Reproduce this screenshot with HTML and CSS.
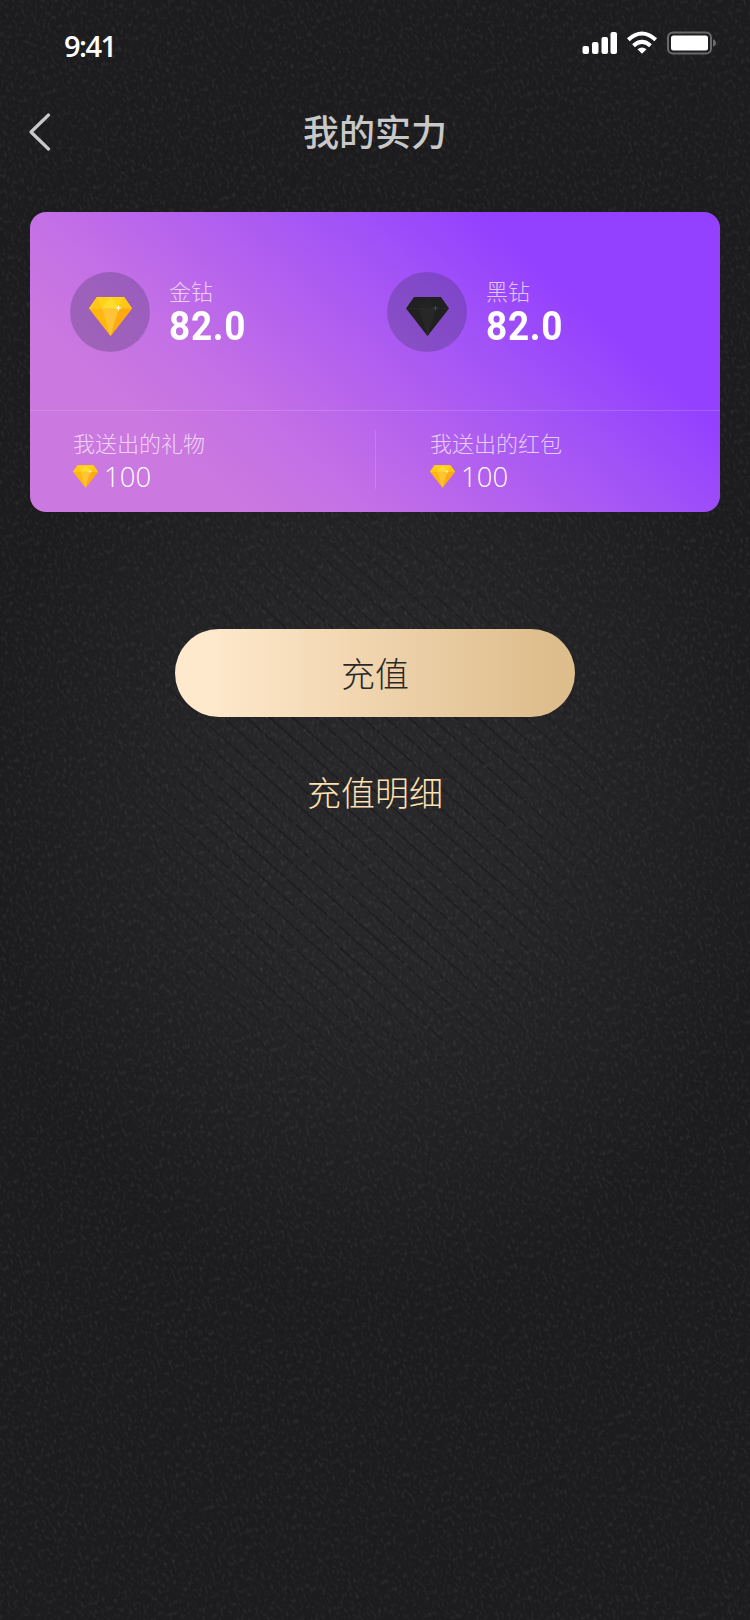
FILE: index.html
```html
<!DOCTYPE html>
<html lang="zh-CN">
<head>
<meta charset="utf-8">
<title>我的实力</title>
<link rel="stylesheet" href="styles.css">
</head>
<body>
<svg class="defs" width="0" height="0" aria-hidden="true">
  <defs>
    <symbol id="gem" viewBox="0 0 43 39">
      <path fill="#ffb60d" d="M0 11.500 21.500 39 43 11.500 35 0H8z"/>
      <path fill="#ffd21a" d="M8 0h27l8 11.500H0z"/>
      <path fill="#ffc61a" d="M8 0 13 11.500H0zM35 0l8 11.500H30z"/>
      <path fill="#ffdc2e" d="M21.500 0 30 11.500H13z"/>
      <path fill="#ffc436" d="M13 11.500h17L21.500 39z"/>
      <path fill="#ffaa10" d="M30 11.500h13L21.500 39z"/>
      <path fill="#fffbe0" d="m29.500 8 .8 2.200 2.700.8-2.700.8-.8 2.700-.8-2.700-2.700-.8 2.700-.8z"/>
    </symbol>
    <symbol id="gem-dark" viewBox="0 0 43 39">
      <path fill="#202020" d="M0 11.500 21.500 39 43 11.500 35 0H8z"/>
      <path fill="#232324" d="M21.500 0 30 11.500H13z"/>
      <path fill="#272727" d="M13 11.500h17L21.500 39z"/>
      <path fill="none" stroke="#2b2b30" stroke-width=".6" d="M1 11.500h41"/>
      <path fill="#4c4666" d="m29.500 8 .6 2.400 2.900.6-2.900.6-.6 2.900-.6-2.900-2.900-.6 2.900-.6z"/>
    </symbol>
  </defs>
</svg>
<div class="page">
  <svg class="grain" width="750" height="1620" aria-hidden="true">
    <filter id="grain" x="0" y="0" width="100%" height="100%">
      <feTurbulence type="fractalNoise" baseFrequency=".36 .2" numOctaves="3" seed="8"/>
      <feColorMatrix values="0 0 0 0 1  0 0 0 0 1  0 0 0 0 1  .2 0 0 0 -.1"/>
    </filter>
    <rect width="1500" height="2200" x="-300" y="-300" transform="rotate(-18 375 810)" filter="url(#grain)"/>
  </svg>
  <header class="status">
    <span class="time">9:41</span>
    <svg class="signals" width="136" height="24" viewBox="0 0 136 24">
      <g fill="#fff">
        <rect x="2.500" y="15" width="6.500" height="8" rx="2"/>
        <rect x="12" y="11" width="6.500" height="12" rx="2"/>
        <rect x="21.500" y="6" width="6.500" height="17" rx="2"/>
        <rect x="30.500" y="1" width="6.500" height="22" rx="2"/>
        <path d="m62 22.700-4.500-4.400q4.500-3.700 9 0z"/>
      </g>
      <g fill="none" stroke="#fff" stroke-width="4">
        <path d="M48.300 8.700q13.700-12.400 27.400 0"/>
        <path d="M53.500 14.700q8.500-7.600 17 0"/>
      </g>
      <rect x="88" y="1.500" width="43" height="21" rx="5" fill="none" stroke="#69696b" stroke-width="2"/>
      <rect x="91" y="4.500" width="37" height="15" rx="2.500" fill="#fff"/>
      <path fill="#69696b" d="M133 8.300q3 1 3 3.700t-3 3.700z"/>
    </svg>
  </header>
  <nav class="nav">
    <svg class="back" width="22" height="38" viewBox="0 0 22 38"><path d="M19.500 2 2 19l17.500 17" fill="none" stroke="#c8c8c8" stroke-width="3.200" stroke-linecap="round" stroke-linejoin="round"/></svg>
    <h1 class="title">我的实力</h1>
  </nav>
  <section class="card">
    <div class="balances">
      <div class="balance">
        <span class="disc"><svg width="43" height="39"><use href="#gem"/></svg></span>
        <div class="info"><span class="label">金钻</span><strong class="amount">82.0</strong></div>
      </div>
      <div class="balance">
        <span class="disc"><svg width="43" height="39"><use href="#gem-dark"/></svg></span>
        <div class="info"><span class="label">黑钻</span><strong class="amount">82.0</strong></div>
      </div>
    </div>
    <div class="sent">
      <div class="gift">
        <span class="label">我送出的礼物</span>
        <div class="count"><svg width="25" height="23"><use href="#gem"/></svg><span>100</span></div>
      </div>
      <div class="gift packet">
        <span class="label">我送出的红包</span>
        <div class="count"><svg width="25" height="23"><use href="#gem"/></svg><span>100</span></div>
      </div>
    </div>
  </section>
  <button class="recharge">充值</button>
  <a class="details">充值明细</a>
</div>
</body>
</html>
```
FILE: styles.css
```css
* { box-sizing: border-box; }
body { margin: 0; background: #1c1c1e; }
.defs { position: absolute; }
.page {
  position: relative;
  isolation: isolate;
  display: flex;
  flex-direction: column;
  width: 750px;
  height: 1620px;
  overflow: hidden;
  background: radial-gradient(ellipse 400px 500px at 385px 800px, #28282a 0%, #262628 35%, #1c1c1e 100%);
  font-family: "Noto Sans", "Noto Sans CJK SC", sans-serif;
}
/* Diagonal brushed lines that fade out around the centre */
.page::before {
  content: "";
  position: absolute;
  z-index: -1;
  inset: 0;
  background: repeating-linear-gradient(42deg, transparent 0 13px, rgba(10, 10, 12, .4) 14px, transparent 15.500px);
  -webkit-mask-image: radial-gradient(ellipse 290px 350px at 375px 800px, #000 45%, transparent 100%);
  mask-image: radial-gradient(ellipse 290px 350px at 375px 800px, #000 45%, transparent 100%);
}
.grain { position: absolute; z-index: -1; inset: 0; }
.status {
  display: flex;
  justify-content: space-between;
  align-items: flex-start;
  height: 88px;
  padding: 26px 34px 0 64px;
}
.time {
  font: 600 29px/40px "Open Sans", sans-serif;
  letter-spacing: -1.500px;
  color: #fff;
}
.signals { margin-top: 5px; }
.nav {
  display: grid;
  grid-template-columns: 60px 1fr 60px;
  align-items: center;
  height: 88px;
  padding: 0 28px;
}
.back { margin-left: 1px; }
.title {
  margin: 0;
  padding-bottom: 4px;
  font: 500 36px/52px "Noto Sans CJK SC", sans-serif;
  text-align: center;
  color: #c8c8c8;
}
.card {
  height: 300px;
  margin: 36px 30px 0;
  border-radius: 16px;
  background: linear-gradient(42deg, #cb78e0 21%, #c470e6 33%, #a152f7 63%, #9440ff 77%);
}
.balances {
  display: grid;
  grid-template-columns: 317px 1fr;
  height: 199px;
  padding: 60px 40px 0;
  border-bottom: 1px solid rgba(255, 255, 255, .15);
}
.balance { display: flex; gap: 19px; }
.disc {
  display: flex;
  align-items: center;
  justify-content: center;
  width: 80px;
  height: 80px;
  padding-top: 9px;
  border-radius: 50%;
  background: rgba(51, 51, 81, .28);
}
.info { display: flex; flex-direction: column; align-items: flex-start; padding-top: 2px; }
.label {
  font: 300 22px/32px "Noto Sans CJK SC", sans-serif;
  color: rgba(255, 255, 255, .7);
}
.amount {
  margin-top: 1px;
  font: 700 41px/38px Roboto, sans-serif;
  letter-spacing: .8px;
  color: #fff;
  transform: scaleX(.9);
  transform-origin: left;
}
.sent { display: grid; grid-template-columns: 345px 1fr; height: 101px; }
.gift { display: flex; flex-direction: column; padding: 15px 0 0 43px; }
.packet { position: relative; padding-left: 55px; }
.packet::before {
  content: "";
  position: absolute;
  top: 19px;
  left: 0;
  width: 1px;
  height: 59px;
  background: rgba(255, 255, 255, .15);
}
.count {
  display: flex;
  align-items: center;
  gap: 6px;
  height: 33px;
  margin-top: 2px;
  font: 300 27.500px/33px "Open Sans", "Noto Sans", sans-serif;
  color: #fff;
}
.recharge {
  align-self: center;
  width: 400px;
  height: 88px;
  margin-top: 117px;
  padding: 0;
  border: 0;
  border-radius: 44px;
  background: linear-gradient(90deg, #ffe9cc 8%, #debd8c 94%);
  font: 300 34px/88px "Noto Sans CJK SC", sans-serif;
  color: #292929;
}
.details {
  align-self: center;
  margin-top: 50px;
  font: 300 34px/50px "Noto Sans CJK SC", sans-serif;
  color: #ffe0b0;
}
```
